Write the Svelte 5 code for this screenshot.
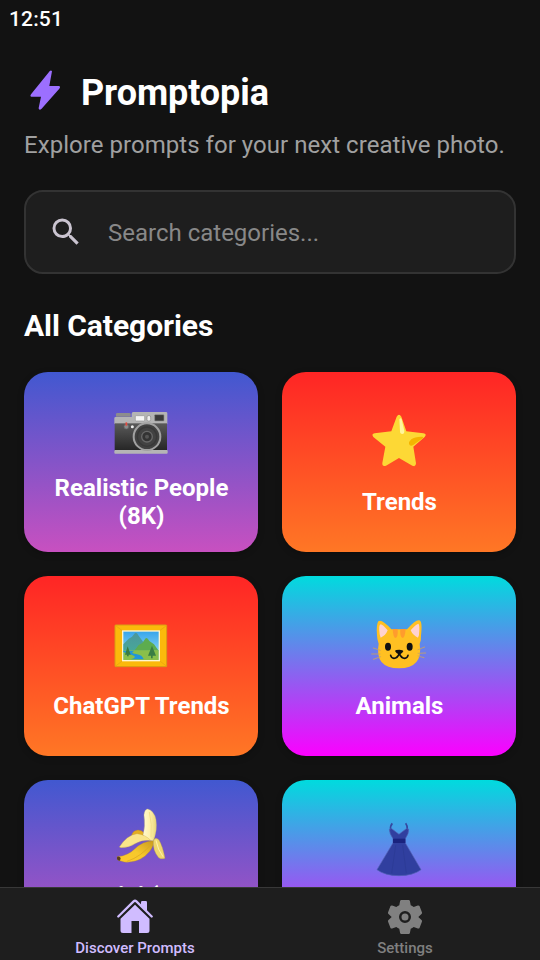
<script>
  const cards = [
    { title: 'Realistic People (8K)', icon: 'camera', tone: 'violet' },
    { title: 'Trends', icon: 'star', tone: 'fire' },
    { title: 'ChatGPT Trends', icon: 'picture', tone: 'fire' },
    { title: 'Animals', icon: 'cat', tone: 'neon' },
    { title: 'Gemini (Nano Banana)', icon: 'banana', tone: 'violet' },
    { title: 'Fashion', icon: 'dress', tone: 'neon' }
  ];
</script>

{#snippet art(name)}
  <svg class="art" viewBox="0 0 60 60" aria-hidden="true">
    {#if name === 'camera'}
      <defs>
        <linearGradient id="leather" x1="0" y1="0" x2="0" y2="1"><stop offset="0" stop-color="#5a5a5a" /><stop offset="1" stop-color="#252525" /></linearGradient>
      </defs>
      <g transform="translate(-11 4) scale(.33333)">
        <path d="M48 50V43q0-4 4-4H88q4 0 4 4v7z" fill="#8d8d8d" />
        <path d="M43 72V55q0-4 4-4H95V41q0-5 5-5H198q4 0 4 4V72z" fill="#b4b4b4" />
        <rect x="44" y="70" width="157" height="82" fill="url(#leather)" />
        <rect x="43" y="150" width="160" height="11" rx="3" fill="#b5b5b5" />
        <rect x="106" y="47" width="28" height="16" rx="3" fill="#f5f5f5" stroke="#969696" stroke-width="2" />
        <rect x="141" y="47" width="11" height="16" rx="4" fill="#eee" stroke="#858585" stroke-width="2" />
        <rect x="164" y="44" width="28" height="19" rx="2" fill="#393939" stroke="#8d8d8d" stroke-width="2" />
        <circle cx="141" cy="110" r="40" fill="#414141" stroke="#a1a1a1" stroke-width="6" />
        <circle cx="141" cy="110" r="29" fill="#424242" stroke="#383838" stroke-width="4" />
        <circle cx="141" cy="110" r="16" fill="#333" stroke="#696969" stroke-width="4" />
        <circle cx="141" cy="110" r="6" fill="#555" />
        <circle cx="79" cy="80" r="7" fill="#8b8b8b" stroke="#666" stroke-width="2" />
        <path d="M79 67v10" stroke="#e8483d" stroke-width="5" />
        <circle cx="97" cy="80" r="4.5" fill="#eee" />
      </g>
    {:else if name === 'star'}
      <g transform="translate(-9 -5) scale(.33333)">
        <path d="M110 35Q117 24 124 35L139 79L190 85Q202 87 194 96L160 125L168 175Q168 187 157 182L117 159L78 182Q66 186 67 174L76 125L40 96Q33 87 44 85L94 79Z" fill="#fdd835" />
        <path d="M118 43Q122 37 125 43L133 77Q134 86 127 87Q120 87 120 79Z" fill="#fff59d" />
        <path d="M188 95Q191 96 188 100L160 120Q150 125 147 117Q146 110 154 103Q165 94 188 95Z" fill="#f4b400" />
      </g>
    {:else if name === 'picture'}
      <defs>
        <linearGradient id="sky" x1="0" y1="0" x2="0" y2="1"><stop offset="0" stop-color="#36a5eb" /><stop offset="1" stop-color="#a5e4f6" /></linearGradient>
        <linearGradient id="peak" x1="0" y1="0" x2="0" y2="1"><stop offset="0" stop-color="#4b969c" /><stop offset="1" stop-color="#48a799" /></linearGradient>
      </defs>
      <g transform="translate(-11 1) scale(.33333)">
        <rect x="45" y="30" width="155" height="125" rx="2" fill="#fbb90b" stroke="#d99b15" stroke-width="3" />
        <path d="M47 32L68 48M199 32L178 48M47 153L68 137M199 153L178 137" stroke="#e6a011" stroke-width="2" />
        <rect x="68" y="48" width="110" height="89" fill="url(#sky)" stroke="#fff5d0" stroke-width="4" />
        <path d="M70 88L86 71L96 65L105 54Q110 50 116 62L132 84L149 107H70Z" fill="url(#peak)" />
        <path d="M103 107L116 90L127 84L137 70Q142 67 148 78L162 88L176 107Z" fill="#5dac4f" />
        <path d="M70 106H176V135H70Z" fill="#8abf4a" />
        <path d="M70 107H104Q88 114 108 117T131 133H93Q115 126 96 120T70 111Z" fill="#2196d9" />
        <path d="M83 94L75 119H81V124H86V119H92ZM156 92L144 122H153V130H158V122H168Z" fill="#397d43" />
      </g>
    {:else if name === 'cat'}
      <g transform="translate(-9 -4) scale(.33333)">
        <path d="M51 76Q48 44 55 34Q65 26 94 58H141Q167 28 178 31Q188 34 183 77Q184 91 179 102Q190 174 117 175Q43 174 56 101Q51 88 51 76Z" fill="#ffc022" />
        <path d="M59 73Q55 45 62 43Q68 43 83 61Q77 77 62 83ZM152 61Q167 43 175 41Q180 44 177 75L174 83Q158 76 152 61Z" fill="#ffd2cf" />
        <path d="M98 57H113Q115 84 105 84Q99 78 98 57ZM121 57H137Q135 84 127 84Q119 79 121 57Z" fill="#ff9c2d" />
        <ellipse cx="84" cy="110" rx="9" ry="12" fill="#111" /><ellipse cx="149" cy="110" rx="9" ry="12" fill="#111" />
        <path d="M105 123Q106 119 118 119Q130 119 130 124Q128 130 118 134Q108 130 105 123Z" fill="#111" />
        <path d="M118 131Q112 145 102 145Q94 144 92 136M118 131Q124 145 134 145Q142 144 144 136" fill="none" stroke="#111" stroke-width="5" stroke-linecap="round" />
        <path d="M40 114L61 121M35 132H60M40 148L62 140M194 111L174 119M197 129L174 130M192 143L174 138" fill="none" stroke="#c6a264" stroke-width="2.5" stroke-linecap="round" />
      </g>
    {:else if name === 'banana'}
      <defs>
        <linearGradient id="flesh"><stop stop-color="#fffbd1" /><stop offset=".5" stop-color="#fff0ac" /><stop offset="1" stop-color="#e8d679" /></linearGradient>
        <linearGradient id="peel" x1="0" y1="1" x2="1" y2="0"><stop stop-color="#ffc928" /><stop offset=".5" stop-color="#f6c82c" /><stop offset="1" stop-color="#c99a1e" /></linearGradient>
      </defs>
      <g transform="translate(-6 -4) scale(.33333)" stroke-linejoin="round">
        <path d="M80 104Q85 91 99 90Q111 91 116 98L113 108Z" fill="#e5ad1f" stroke="#b58221" />
        <path d="M37 170Q69 167 90 146Q112 124 145 122Q148 134 135 153Q104 191 58 186L40 181Q34 177 37 170Z" fill="url(#peel)" stroke="#b38c25" />
        <path d="M66 184Q109 170 141 130" fill="none" stroke="#d6a522" stroke-width="2" />
        <path d="M114 105Q122 78 117 45Q119 27 128 27Q147 31 153 59Q158 91 145 122Q123 123 114 105Z" fill="url(#flesh)" stroke="#cdbb6d" />
        <path d="M133 36Q142 72 138 112" fill="none" stroke="#f2df8a" stroke-width="3" />
        <path d="M43 141Q66 105 96 101Q120 103 137 121Q109 120 90 131Q73 143 48 143Z" fill="#fae589" stroke="#c3a446" />
        <path d="M145 122Q142 150 161 173Q170 179 180 175Q173 138 162 120Q151 109 145 122Z" fill="#efd76d" stroke="#b79b3b" />
        <path d="M153 121Q158 149 174 170" fill="none" stroke="#fff2ad" stroke-width="3" />
        <path d="M37 170Q43 169 47 174L45 182Q35 182 36 173Z" fill="#583c20" />
      </g>
    {:else}
      <g transform="translate(-94 -43) scale(.33333)">
        <path d="M352 145Q345 153 347 164M392 145Q398 153 397 164" fill="none" stroke="#3548a0" stroke-width="5" />
        <path d="M343 163L350 161L372 178L394 161L401 163Q402 175 391 191V204L438 284Q414 302 372 302Q330 302 306 284L354 204V191Q343 175 343 163Z" fill="#303f9f" stroke="#5261b4" stroke-width="2" />
        <path d="M354 191H391V204H354Z" fill="#1a237e" />
        <path d="M362 211L350 295M383 211L394 295" stroke="#2b3993" stroke-width="2" />
      </g>
    {/if}
  </svg>
{/snippet}

<div class="app">
  <div class="status">12:51</div>
  <main>
    <header>
      <svg class="bolt" viewBox="0 0 48 48" aria-hidden="true">
        <path d="M24.4 6.8Q26.8 3.2 28 5.3L25.3 20H34.8Q37 20.5 35.3 22.8L17.6 42.8Q15.2 45 14.6 42.3L17 30.8H7.5Q5.5 30.3 7.2 28Z" fill="#9c6fff" />
      </svg>
      <h1>Promptopia</h1>
    </header>
    <p>Explore prompts for your next creative photo.</p>
    <label class="search">
      <svg viewBox="0 0 24 24" aria-hidden="true"><path d="M15.5 14h-.79l-.28-.27A6.47 6.47 0 0 0 16 9.5 6.5 6.5 0 1 0 9.5 16c1.61 0 3.09-.59 4.23-1.57l.27.28v.79l5 4.99L20.49 19l-4.99-5zm-6 0C7.01 14 5 11.99 5 9.5S7.01 5 9.5 5 14 7.01 14 9.5 11.99 14 9.5 14z" /></svg>
      <input type="text" placeholder="Search categories..." />
    </label>
    <h2>All Categories</h2>
    <section class="grid">
      {#each cards as card}
        <article class="card {card.tone}">
          {@render art(card.icon)}
          <h3>{card.title}</h3>
        </article>
      {/each}
    </section>
  </main>
  <nav>
    <a class="active" href="#discover">
      <svg viewBox="0 0 36 36" aria-hidden="true">
        <path d="M24 6V3.2Q24 2 25.2 2H28.8Q30 2 30 3.2V12L24 6Z" />
        <path d="M1.3 17.5L16.6 2.4Q18 1.2 19.4 2.4L34.7 17.5" fill="none" stroke="currentColor" stroke-width="2.3" stroke-linecap="round" />
        <path d="M18 5.7L32.5 19.8V31.5Q32.5 34 30 34H22V22H14.5V34H6Q3.5 34 3.5 31.5V19.8Z" />
      </svg>
      <span>Discover Prompts</span>
    </a>
    <a href="#settings">
      <svg viewBox="0 0 36 36" aria-hidden="true">
        <path fill-rule="evenodd" d="M14.5 1H21.5Q22.7 1 22.9 2.1L23.7 6.3Q25.2 7 26.7 8L30.8 6.6Q31.9 6.2 32.5 7.1L35 13.4Q35.3 14.3 34.5 15L31.3 17.9L34.5 21Q35.3 21.7 35 22.6L32.5 28.9Q31.9 29.9 30.8 29.5L26.7 28Q25.2 29.1 23.7 29.7L22.9 34Q22.7 35 21.5 35H14.5Q13.3 35 13.1 34L12.3 29.7Q10.8 29.1 9.3 28L5.2 29.5Q4.1 29.9 3.5 28.9L1 22.6Q.7 21.7 1.5 21L4.7 17.9L1.5 15Q.7 14.3 1 13.4L3.5 7.1Q4.1 6.2 5.2 6.6L9.3 8Q10.8 7 12.3 6.3L13.1 2.1Q13.3 1 14.5 1ZM18 12A6 6 0 1 0 18 24A6 6 0 1 0 18 12Z" />
        <circle cx="18" cy="18" r="3.5" />
      </svg>
      <span>Settings</span>
    </a>
  </nav>
</div>

<style>
  :global(body) { margin: 0; background: #121212; }
  * { box-sizing: border-box; }
  .app {
    height: 960px;
    display: flex;
    flex-direction: column;
    overflow: hidden;
    background: #121212;
    color: #fff;
    font-family: Roboto, sans-serif;
  }
  .status { flex: none; height: 48px; padding: 7px 0 0 9px; font-size: 21px; line-height: 24px; font-weight: 500; letter-spacing: 0.15px; }
  main { flex: 1; min-height: 0; overflow: hidden; padding: 18px 24px 0; }
  header { display: flex; align-items: center; height: 54px; gap: 9px; }
  .bolt { width: 48px; height: 48px; margin-bottom: 6px; }
  h1, h2, h3, p { margin: 0; }
  h1 { font-size: 36px; line-height: 42px; font-weight: 700; letter-spacing: -0.08px; }
  p { margin-top: 10px; font-size: 24px; line-height: 30px; letter-spacing: 0.04px; color: #a0a0a0; white-space: nowrap; }
  .search {
    display: flex;
    align-items: center;
    height: 84px;
    margin-top: 30px;
    padding-left: 22px;
    gap: 24px;
    border: 2px solid #333;
    border-radius: 19px;
    background: #1e1e1e;
  }
  .search svg { width: 36px; height: 36px; fill: #cac4d0; }
  .search input {
    flex: 1;
    min-width: 0;
    padding: 2px 0 0;
    border: 0;
    outline: 0;
    background: transparent;
    color: #fff;
    font: 24px/30px Roboto, sans-serif;
  }
  .search input::placeholder { color: #888; opacity: 1; }
  h2 { margin-top: 34px; font-size: 30px; line-height: 36px; font-weight: 700; letter-spacing: -0.06px; }
  .grid { display: grid; grid-template-columns: 1fr 1fr; grid-auto-rows: 180px; gap: 24px; margin-top: 28px; }
  .card {
    display: flex;
    flex-direction: column;
    align-items: center;
    padding: 38px 24px 0;
    gap: 18px;
    border-radius: 24px;
    box-shadow: 0 2px 6px rgb(0 0 0 / 0.25);
  }
  .card:nth-child(4n + 1) { padding-top: 24px; }
  .violet { background: linear-gradient(#4158d0, #c850c0); }
  .fire { background: linear-gradient(#ff2525, #ff7725); }
  .neon { background: linear-gradient(#00dbde, #fc00ff); }
  .art { flex: none; width: 60px; height: 60px; }
  h3 { padding-left: 1px; font-size: 24px; line-height: 28px; font-weight: 700; text-align: center; }
  nav { flex: none; display: flex; height: 73px; border-top: 1px solid #383838; background: #1e1e1e; }
  nav a {
    flex: 1;
    display: flex;
    flex-direction: column;
    align-items: center;
    padding-top: 11px;
    gap: 4px;
    color: #808080;
    font-size: 15px;
    line-height: 18px;
    font-weight: 500;
    text-decoration: none;
  }
  nav a.active { color: #d0bcff; }
  nav svg { width: 36px; height: 36px; fill: currentColor; }
</style>
